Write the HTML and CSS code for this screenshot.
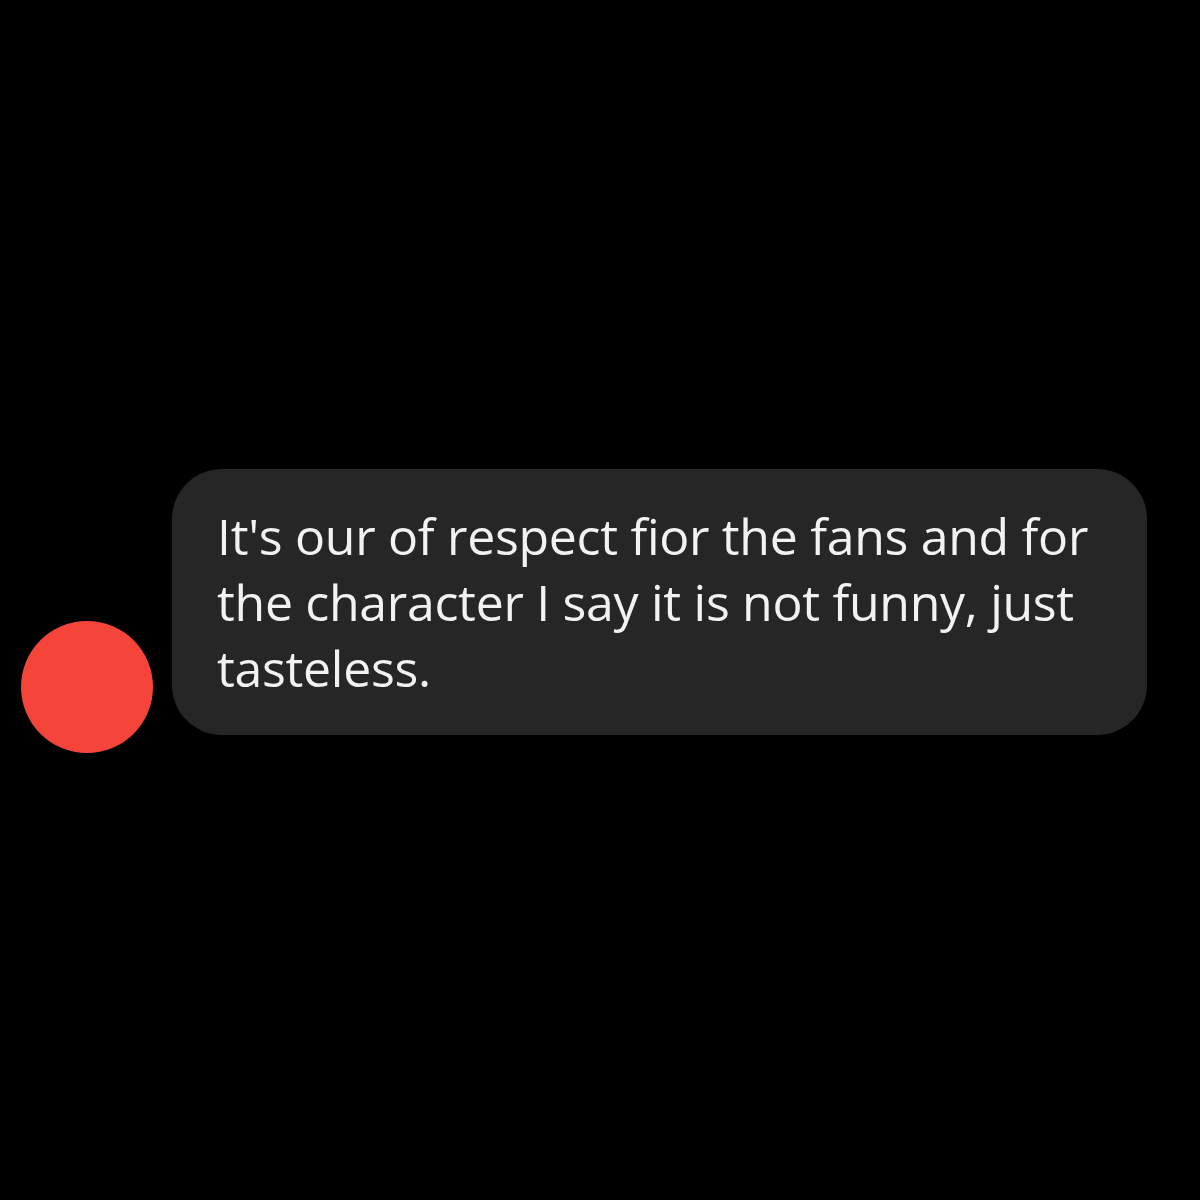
FILE: index.html
```html
<!DOCTYPE html>
<html lang="en">
<head>
    <meta charset="UTF-8">
    <meta name="viewport" content="width=device-width, initial-scale=1.0">
    <title>Message</title>
    <link rel="stylesheet" href="styles.css">
</head>
<body>
    <div class="message-row">
        <div class="avatar"></div>
        <div class="bubble">
            It's our of respect fior the fans and for<br>
            the character I say it is not funny, just<br>
            tasteless.
        </div>
    </div>
</body>
</html>
```

FILE: styles.css
```css
* {
    box-sizing: border-box;
}
body {
    margin: 0;
    min-height: 100vh;
    padding-top: 22px;
    background: #000;
    font-family: "Open Sans", "Noto Sans", sans-serif;
    display: flex;
    align-items: center;
}
.message-row {
    display: flex;
    align-items: flex-end;
    gap: 19px;
    padding-left: 21px;
}
.avatar {
    width: 132px;
    height: 132px;
    border-radius: 50%;
    background: #f5453a;
    flex-shrink: 0;
}
.bubble {
    width: 975px;
    margin-bottom: 18px;
    padding: 34px 20px 34px 45px;
    background: #262626;
    border-radius: 50px;
    color: #f2f2f2;
    font-size: 50px;
    line-height: 66px;
    letter-spacing: -0.3px;
    white-space: nowrap;
}
```
